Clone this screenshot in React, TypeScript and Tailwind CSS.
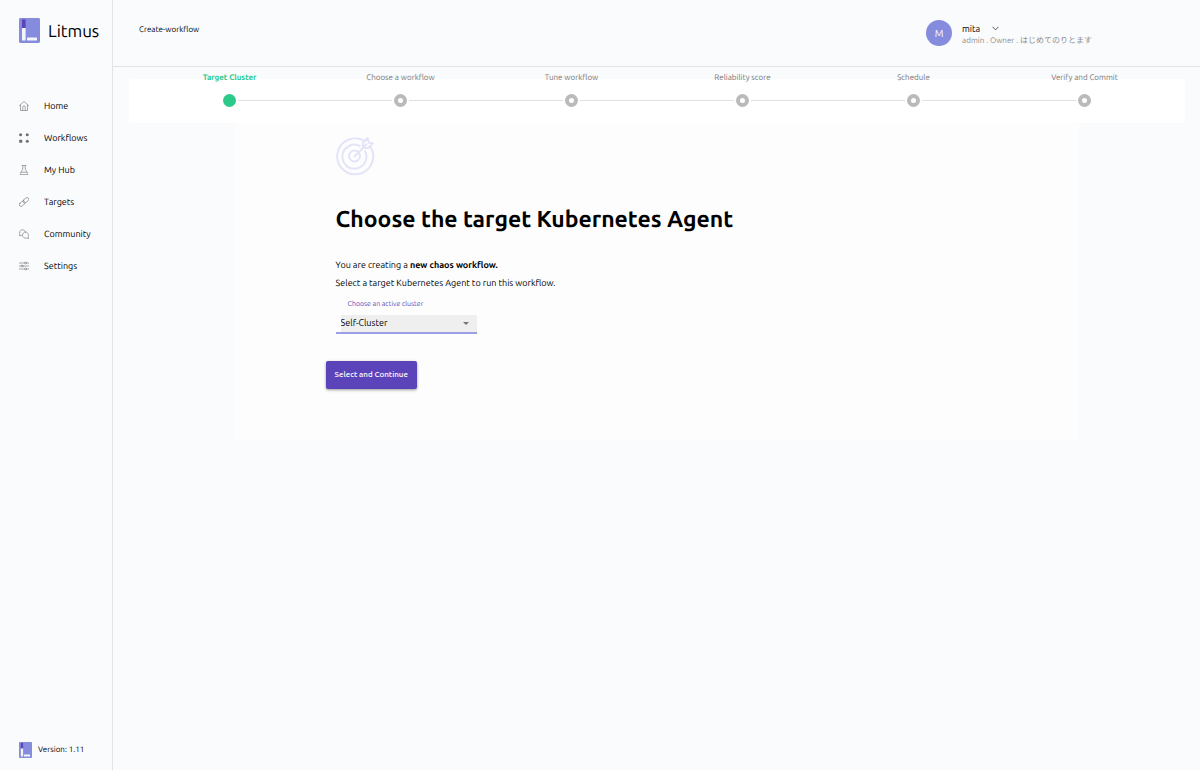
import React from "react";

const steps = [
  "Target Cluster",
  "Choose a workflow",
  "Tune workflow",
  "Reliability score",
  "Schedule",
  "Verify and Commit",
];

function Logo({ className }: { className: string }) {
  return (
    <svg className={className} viewBox="0 0 21 26" preserveAspectRatio="none" aria-hidden="true">
      <rect width="21" height="26" rx="1.5" fill="#858cdd" />
      <rect x="3" y="1.5" width="3.6" height="9" fill="#5b44ba" />
      <rect x="3" y="10.5" width="3.6" height="13" rx="0.5" fill="#f4f4fb" />
      <rect x="8" y="20.3" width="10" height="3.2" rx="0.5" fill="#f4f4fb" />
    </svg>
  );
}

function NavIcon({ children }: { children: React.ReactNode }) {
  return (
    <svg
      className="size-[10px] shrink-0"
      viewBox="0 0 20 20"
      fill="none"
      stroke="#858585"
      strokeWidth="1.4"
      strokeLinecap="round"
      strokeLinejoin="round"
      aria-hidden="true"
    >
      {children}
    </svg>
  );
}

const navItems = [
  {
    label: "Home",
    icon: (
      <>
        <path d="M1 9 10 1l9 8" />
        <path d="M3 7.5V19h14V7.5" />
        <path d="M7.5 19v-7a2.5 2.5 0 0 1 5 0v7" />
      </>
    ),
  },
  {
    label: "Workflows",
    icon: (
      <g fill="#6f6f6f" stroke="none">
        <circle cx="3.2" cy="3.4" r="3" />
        <circle cx="16.5" cy="3.4" r="3" />
        <rect x="0.4" y="13.4" width="6" height="6" rx="1" />
        <circle cx="16.5" cy="16.4" r="3" />
      </g>
    ),
  },
  {
    label: "My Hub",
    icon: (
      <>
        <path d="M6 1h8M7.5 1v7.5L2.5 17v2h15v-2l-5-8.5V1" />
        <path d="M4.5 14.5h11" />
      </>
    ),
  },
  {
    label: "Targets",
    icon: (
      <g transform="rotate(-42 10 10)">
        <rect x="-1.5" y="6.5" width="13" height="7" rx="3.5" />
        <rect x="8.5" y="6.5" width="13" height="7" rx="3.5" />
      </g>
    ),
  },
  {
    label: "Community",
    icon: (
      <>
        <path d="M6 12.5 1 13.5l.6-3.6A6 6 0 1 1 12.6 5" />
        <path d="M13 6a6 6 0 0 1 5.4 8.6l.8 4.4-4.4-.8A6.2 6.2 0 1 1 13 6Z" />
      </>
    ),
  },
  {
    label: "Settings",
    icon: (
      <>
        <path d="M0 4h11M15 4h5M0 10h4M8 10h12M0 16h11M15 16h5" />
        <circle cx="13" cy="4" r="2" />
        <circle cx="6" cy="10" r="2" />
        <circle cx="13" cy="16" r="2" />
      </>
    ),
  },
];

function Sidebar() {
  return (
    <aside className="flex w-[113px] shrink-0 flex-col border-r border-[#e3e4e8]">
      <a href="#home" className="flex h-[90px] items-start gap-2 pt-[18px] pl-[19px]">
        <Logo className="h-[25px] w-[21px] shrink-0" />
        <span className="text-[17px] leading-7">Litmus</span>
      </a>
      <nav className="flex flex-col">
        {navItems.map((item) => (
          <a
            key={item.label}
            href={"#" + item.label.toLowerCase().replace(" ", "-")}
            className="flex h-8 items-center gap-[15px] pl-[19px] text-[9px] leading-3"
          >
            <NavIcon>{item.icon}</NavIcon>
            {item.label}
          </a>
        ))}
      </nav>
      <div className="mt-auto flex items-center gap-[6px] pb-3 pl-[19px] text-[8px] leading-3">
        <Logo className="h-4 w-[13px] shrink-0" />
        Version: 1.11
      </div>
    </aside>
  );
}

function Header() {
  return (
    <header className="flex h-[67px] justify-between border-b border-[#e3e4e8] pr-[108px] pl-[26px]">
      <p className="pt-6 text-[8px] leading-3">Create-workflow</p>
      <div className="flex items-center gap-[10px]">
        <div className="flex size-[26px] items-center justify-center rounded-full bg-[#858cdd] text-[10px] text-white">
          M
        </div>
        <div className="pt-[3px]">
          <button type="button" className="flex items-center gap-3 text-[9px] leading-3">
            mita
            <svg className="h-[5px] w-[7px]" viewBox="0 0 7 5" fill="none" stroke="#555" aria-hidden="true">
              <path d="M.5.8 3.5 3.8 6.5.8" />
            </svg>
          </button>
          <p className="text-[8px] leading-3 text-[#8b8b8b]">admin . Owner . はじめてのりとます</p>
        </div>
      </div>
    </header>
  );
}

function Stepper() {
  return (
    <ol className="flex bg-white px-[15px] pb-4">
      {steps.map((step, i) => {
        const active = i === 0;
        return (
          <li key={step} className="-mt-2 flex-1" aria-current={active ? "step" : undefined}>
            <p
              className={
                active
                  ? "text-center text-[8px] leading-[14px] font-bold text-[#2bca8b]"
                  : "text-center text-[8px] leading-[14px] text-[#757575]"
              }
            >
              {step}
            </p>
            <div className="mt-[9px] flex items-center">
              <span className={i === 0 ? "flex-1" : "h-px flex-1 bg-[#e0e0e0]"} />
              <span
                className={
                  active
                    ? "mx-[2px] size-[13px] rounded-full bg-[#2bca8b]"
                    : "mx-[2px] size-[13px] rounded-full border-4 border-[#bababa] bg-white"
                }
              />
              <span className={i === steps.length - 1 ? "flex-1" : "h-px flex-1 bg-[#e0e0e0]"} />
            </div>
          </li>
        );
      })}
    </ol>
  );
}

function TargetIcon() {
  return (
    <svg className="size-10" viewBox="1 0 40 40" fill="none" stroke="#e3e4f8" strokeWidth="2" aria-hidden="true">
      <path d="M30 5.2A18 18 0 1 0 35.3 10.5" />
      <path d="M25.6 10.4A12 12 0 1 0 29.7 14.5" />
      <circle cx="19.5" cy="20" r="5.5" />
      <path d="M19.5 20.5 31.5 8.2" strokeLinecap="round" />
      <path d="M28 11.5V6.8L32.6 2l1 4.4 4.4 1-4.8 4.6H28Z" strokeLinejoin="round" />
    </svg>
  );
}

function ClusterForm() {
  return (
    <section className="mx-[10%] bg-[#fdfdfd] pt-[13px] pb-[51px] pl-[101px]">
      <TargetIcon />
      <h1 className="mt-7 text-[23px] leading-8 font-bold">Choose the target Kubernetes Agent</h1>
      <p className="mt-5 text-[9px] leading-[18px]">
        You are creating a <strong className="font-bold">new chaos workflow.</strong>
      </p>
      <p className="text-[9px] leading-[18px]">
        Select a target Kubernetes Agent to run this workflow.
      </p>
      <label htmlFor="cluster" className="mt-[6px] block pl-3 text-[7px] leading-[13px] text-[#5b44ba]">
        Choose an active cluster
      </label>
      <div className="mt-1 grid w-[141px] items-center border-b-2 border-[#9a9fe8] pl-[5px]">
        <select
          id="cluster"
          defaultValue="Self-Cluster"
          className="col-start-1 row-start-1 h-[17px] appearance-none bg-[#efefef] text-[9px] leading-[17px]"
        >
          <option>Self-Cluster</option>
        </select>
        <svg
          className="pointer-events-none col-start-1 row-start-1 mr-2 h-[3px] w-[6px] justify-self-end"
          viewBox="0 0 6 3"
          fill="#757575"
          aria-hidden="true"
        >
          <path d="M0 0h6L3 3Z" />
        </svg>
      </div>
      <button
        type="button"
        className="mt-[27px] -ml-[10px] block h-7 rounded-[2px] bg-[#5b44ba] px-[9px] text-[8px] font-medium text-white shadow-[0_1px_3px_rgba(0,0,0,0.4)]"
      >
        Select and Continue
      </button>
    </section>
  );
}

export default function App() {
  return (
    <div className="flex min-h-screen bg-[#fafbfd] font-[Ubuntu,'Noto_Sans','Noto_Sans_CJK_JP',sans-serif] text-black [text-rendering:geometricPrecision]">
      <Sidebar />
      <div className="min-w-0 flex-1">
        <Header />
        <main className="pt-3 pr-[15px] pl-4">
          <Stepper />
          <ClusterForm />
        </main>
      </div>
    </div>
  );
}
